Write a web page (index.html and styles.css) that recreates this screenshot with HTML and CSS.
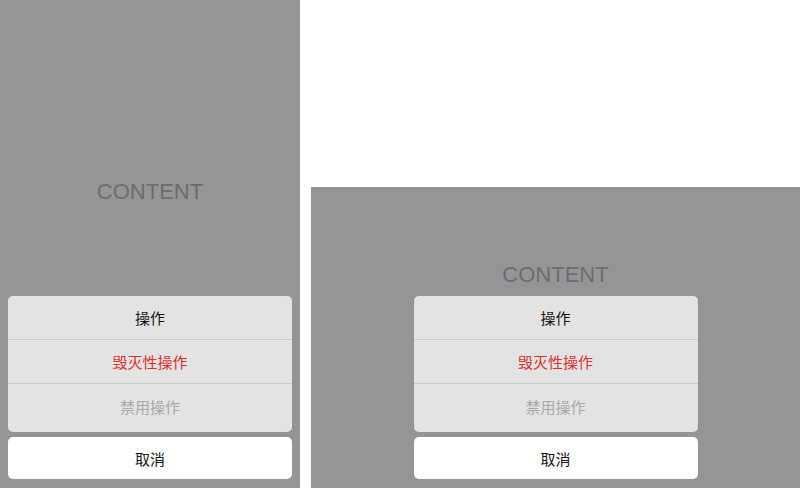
FILE: index.html
```html
<!DOCTYPE html>
<html lang="zh-CN">
<head>
    <meta charset="UTF-8">
    <meta name="viewport" content="width=device-width, initial-scale=1.0">
    <title>ActionSheet</title>
    <link rel="stylesheet" href="styles.css">
</head>
<body>

    <div class="demo">
        <!-- full height screen -->
        <div class="screen screen-tall">
            <div class="screen-label label-tall">CONTENT</div>
            <div class="sheet">
                <div class="sheet-group">
                    <div class="sheet-item">操作</div>
                    <div class="sheet-item danger">毁灭性操作</div>
                    <div class="sheet-item disabled last">禁用操作</div>
                </div>
                <div class="sheet-cancel">取消</div>
            </div>
        </div>

        <!-- wide screen, sheet keeps its width -->
        <div class="wide-col">
            <div class="screen screen-wide">
                <div class="screen-label label-wide">CONTENT</div>
                <div class="sheet sheet-fixed">
                    <div class="sheet-group">
                        <div class="sheet-item">操作</div>
                        <div class="sheet-item danger">毁灭性操作</div>
                        <div class="sheet-item disabled last">禁用操作</div>
                    </div>
                    <div class="sheet-cancel">取消</div>
                </div>
            </div>
        </div>
    </div>

</body>
</html>
```

FILE: styles.css
```css
* {
    margin: 0;
    padding: 0;
    box-sizing: border-box;
}

body {
    background: #ffffff;
    font-family: "Liberation Sans", "Noto Sans CJK SC", Arial, sans-serif;
}

.demo {
    display: flex;
    flex-direction: row;
    width: 800px;
    height: 488px;
    gap: 11px;
}

.screen {
    display: flex;
    flex-direction: column;
    align-items: center;
    background: #959595;
    padding: 0 8px 9px 8px;
}

.screen-tall {
    width: 300px;
    height: 488px;
}

.wide-col {
    flex: 1;
    padding-top: 187px;
}

.screen-wide {
    height: 301px;
}

.screen-label {
    font-size: 22px;
    line-height: 26px;
    color: #6a6c70;
    text-align: center;
}

.label-tall {
    margin-top: 179px;
}

.label-wide {
    margin-top: 75px;
}

.sheet {
    margin-top: auto;
    width: 100%;
    display: flex;
    flex-direction: column;
    gap: 5px;
}

.sheet-fixed {
    width: 284px;
}

.sheet-group {
    background: #e3e3e3;
    border-radius: 5px;
    padding-bottom: 4px;
    overflow: hidden;
}

.sheet-item {
    height: 44px;
    display: flex;
    align-items: center;
    justify-content: center;
    font-size: 15px;
    color: #141414;
    border-bottom: 1px solid #c9c9c9;
}

.sheet-item.last {
    border-bottom: none;
}

.danger {
    color: #d9312d;
}

.disabled {
    color: #a7a7a7;
}

.sheet-cancel {
    height: 42px;
    display: flex;
    align-items: center;
    justify-content: center;
    background: #ffffff;
    border-radius: 5px;
    font-size: 15px;
    color: #141414;
}
```
